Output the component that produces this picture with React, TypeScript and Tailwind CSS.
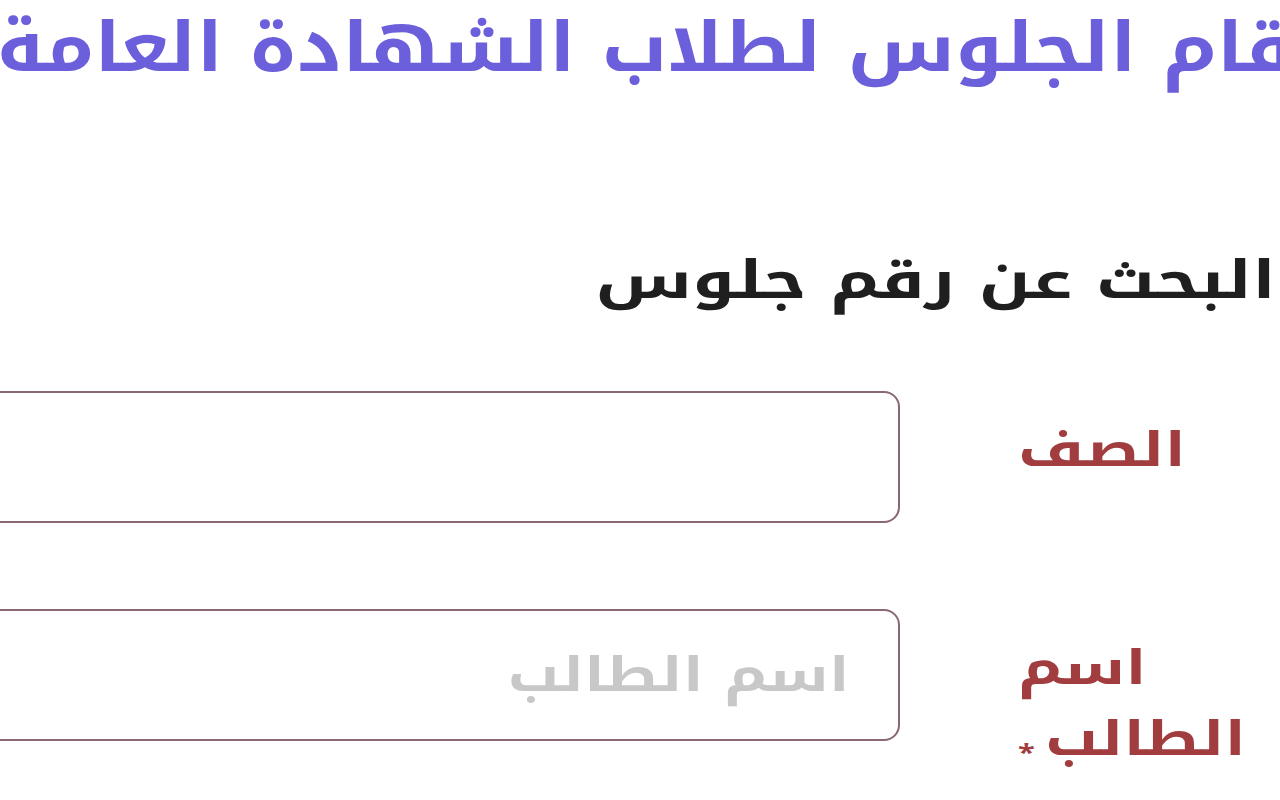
import React from 'react'

const font = { fontFamily: '"Noto Kufi Arabic", "Noto Sans Arabic", "DejaVu Sans", sans-serif' }

function Field({ label, placeholder, required }: { label: string; placeholder?: string; required?: boolean }) {
  return (
    <div className="flex items-start">
      <label className="w-[262px] shrink-0 origin-left scale-x-[1.28] pt-[24px] text-left text-[48px] font-bold leading-[71px] text-[#a13d3f]">
        {label}
        {required && <span className="mr-2 align-[-6px] text-[24px] text-[#a13d3f]">*</span>}
      </label>
      <div className="ml-[-40px] mr-[118px] flex h-[132px] flex-1 items-center rounded-[16px] border-2 border-[#8a6870] bg-white px-[48px]">
        {placeholder && (
          <span className="origin-right scale-x-[1.25] whitespace-nowrap text-[48px] font-bold text-[#c8c8c8]">
            {placeholder}
          </span>
        )}
      </div>
    </div>
  )
}

export default function App() {
  return (
    <div dir="rtl" className="h-[800px] w-[1280px] overflow-hidden bg-white" style={font}>
      <h1 className="mr-[-74px] mt-[4px] origin-right scale-x-[1.12] whitespace-nowrap text-[68px] font-bold leading-[90px] text-[#6b5fdb]">
        أرقام الجلوس لطلاب الشهادة العامة
      </h1>

      <h2 className="mt-[152px] origin-right scale-x-[1.32] pr-[3px] text-[52px] font-bold leading-[70px] text-[#1f1f1f]">
        البحث عن رقم جلوس
      </h2>

      <div className="mt-[75px] flex flex-col gap-[86px]">
        <Field label="الصف" />
        <Field label="اسم الطالب" placeholder="اسم الطالب" required />
      </div>
    </div>
  )
}
